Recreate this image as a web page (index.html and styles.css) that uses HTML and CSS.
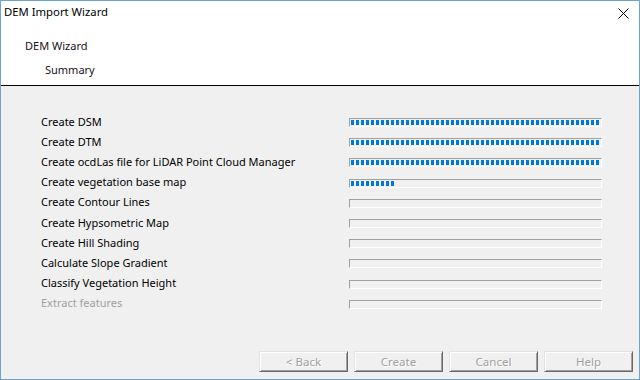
FILE: index.html
```html
<!DOCTYPE html>
<html lang="en">
<head>
  <meta charset="UTF-8" />
  <title>DEM Import Wizard</title>
  <link rel="stylesheet" href="styles.css">
</head>
<body>

<div class="window">

  <!-- title bar -->
  <div class="titlebar">
    <span class="title">DEM Import Wizard</span>
    <svg class="close" width="11" height="11" viewBox="0 0 11 11">
      <path d="M0.5 0.5 L10.5 10.5 M10.5 0.5 L0.5 10.5" stroke="#000" stroke-width="1" fill="none"/>
    </svg>
  </div>

  <!-- wizard header -->
  <div class="header">
    <div class="step">DEM Wizard</div>
    <div class="sub">Summary</div>
  </div>

  <!-- task list -->
  <div class="content">
    <div class="tasks">
      <div class="task"><span>Create DSM</span><div class="bar"><div class="fill" style="width: 100%"></div></div></div>
      <div class="task"><span>Create DTM</span><div class="bar"><div class="fill" style="width: 100%"></div></div></div>
      <div class="task"><span>Create ocdLas file for LiDAR Point Cloud Manager</span><div class="bar"><div class="fill" style="width: 100%"></div></div></div>
      <div class="task"><span>Create vegetation base map</span><div class="bar"><div class="fill" style="width: 44px"></div></div></div>
      <div class="task"><span>Create Contour Lines</span><div class="bar"></div></div>
      <div class="task"><span>Create Hypsometric Map</span><div class="bar"></div></div>
      <div class="task"><span>Create Hill Shading</span><div class="bar"></div></div>
      <div class="task"><span>Calculate Slope Gradient</span><div class="bar"></div></div>
      <div class="task"><span>Classify Vegetation Height</span><div class="bar"></div></div>
      <div class="task disabled"><span>Extract features</span><div class="bar"></div></div>
    </div>

    <div class="buttons">
      <button disabled>&lt; Back</button>
      <button disabled>Create</button>
      <button disabled>Cancel</button>
      <button disabled>Help</button>
    </div>
  </div>

</div>

</body>
</html>
```

FILE: styles.css
```css
* {
  box-sizing: border-box;
  margin: 0;
  padding: 0;
}

body, html {
  font-family: 'Noto Sans', 'Segoe UI', sans-serif;
  font-size: 11px;
  width: 640px;
  height: 380px;
  overflow: hidden;
}

.window {
  width: 640px;
  height: 380px;
  border: 1px solid #6aa5d0;
  display: flex;
  flex-direction: column;
  background-color: #f0f0f0;
}

/* TITLE BAR */
.titlebar {
  height: 30px;
  background: #fff;
  display: flex;
  align-items: flex-start;
  padding: 3px 0 0 3px;
  line-height: 16px;
  color: #000;
}

.titlebar .title {
  font-size: 11.3px;
}

.close {
  margin-left: auto;
  margin-right: 10px;
  margin-top: 4px;
}

/* HEADER */
.header {
  background: #fff;
  height: 55px;
  border-bottom: 1px solid #000;
  padding-top: 7px;
  line-height: 16px;
  color: #1a1020;
}

.header .step {
  padding-left: 24px;
}

.header .sub {
  padding-left: 44px;
  margin-top: 8px;
}

/* CONTENT */
.content {
  flex: 1;
  display: flex;
  flex-direction: column;
  padding: 25px 6px 7px 40px;
}

.task {
  height: 20.2px;
  display: flex;
  align-items: center;
  color: #000;
}

.task span {
  width: 308px;
  line-height: 16px;
  padding-top: 1px;
}

.task.disabled span {
  color: #a0a0a0;
}

.bar {
  width: 253px;
  height: 9px;
  padding: 1px;
  border-top: 1px solid #a0a0a0;
  border-left: 1px solid #a0a0a0;
  border-bottom: 1px solid #fff;
  border-right: 1px solid #fff;
  margin-top: 3px;
}

.fill {
  height: 100%;
  background: repeating-linear-gradient(to right, #0078d7 0, #0078d7 3px, transparent 3px, transparent 5px);
}

/* BUTTONS */
.buttons {
  margin-top: auto;
  display: flex;
  justify-content: flex-end;
  gap: 6px;
}

button {
  width: 89px;
  height: 21px;
  font-family: inherit;
  font-size: 11.5px;
  background: #f0f0f0;
  color: #a0a0a0;
  text-shadow: 1px 1px 0 #fff;
  border: 1px solid;
  border-color: #e3e3e3 #696969 #696969 #e3e3e3;
  box-shadow: inset 1px 1px 0 #fff, inset -1px -1px 0 #a0a0a0;
}
```
